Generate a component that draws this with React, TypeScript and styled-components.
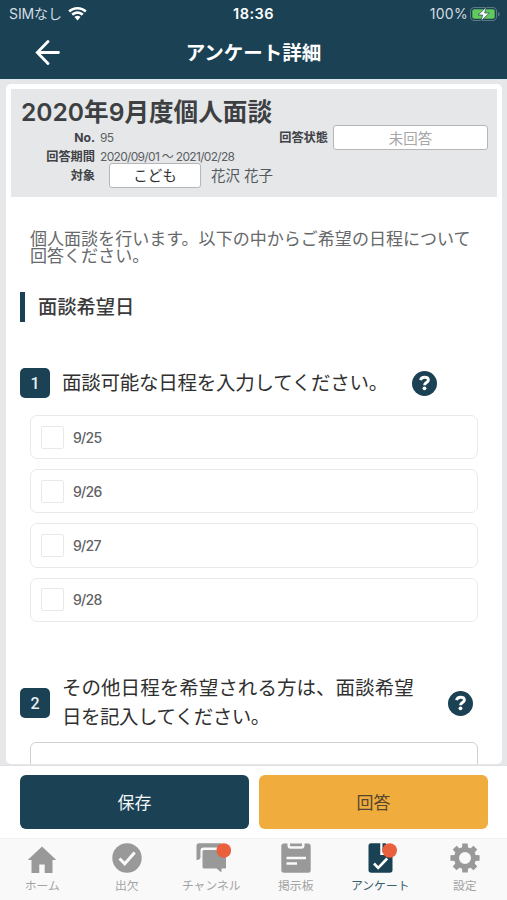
import React from "react";
import styled, { createGlobalStyle } from "styled-components";

const navy = "#1b4154";
const panel = "#e5e7e9";

const GlobalStyle = createGlobalStyle`
  *, *::before, *::after { box-sizing: border-box; }
  body {
    margin: 0;
    background: #fff;
    font-family: Inter, "Noto Sans CJK JP", sans-serif;
    color: #3d3f42;
    overflow: hidden;
  }
`;

const Screen = styled.div`
  display: flex;
  flex-direction: column;
  width: 507px;
  height: 900px;
  overflow: hidden;
`;

const Header = styled.header`
  flex: none;
  height: 79px;
  background: ${navy};
  color: #fff;
`;

const StatusBar = styled.div`
  display: grid;
  grid-template-columns: 1fr auto 1fr;
  align-items: center;
  height: 27px;
  padding: 0 9px;
`;

const Carrier = styled.div`
  display: flex;
  align-items: center;
  gap: 6px;
  font-size: 14px;
  line-height: 20px;
  letter-spacing: -0.1px;
  color: #d3dce1;
`;

const Clock = styled.div`
  font-size: 14.5px;
  font-weight: 600;
  letter-spacing: 0.45px;
`;

const Power = styled(Carrier)`
  justify-content: flex-end;
  gap: 2px;
  margin-right: -3px;
  letter-spacing: 0.3px;
`;

const NavBar = styled.div`
  display: grid;
  grid-template-columns: 60px 1fr 60px;
  align-items: center;
  height: 51px;
`;

const BackButton = styled.button`
  display: flex;
  justify-content: flex-end;
  padding: 0;
  border: 0;
  background: none;
  color: #fff;
`;

const NavTitle = styled.h1`
  margin: 0;
  text-align: center;
  font-size: 19.5px;
  font-weight: 700;
  line-height: 28px;
`;

const Body = styled.main`
  flex: none;
  height: 687px;
  padding: 4px 5px 0 6px;
  background: ${panel};
  border-top: 1px solid #dce8f2;
  border-bottom: 1px solid #dfe1e3;
`;

const Card = styled.section`
  height: 680px;
  padding: 5px 5px 0;
  border-radius: 5px;
  background: #fff;
  overflow: hidden;
`;

const Summary = styled.div`
  height: 108px;
  padding: 9px 10px 0;
  background: ${panel};
`;

const SurveyTitle = styled.h2`
  margin: 0 0 1px;
  font-size: 24.6px;
  font-weight: 600;
  line-height: 28px;
  white-space: nowrap;
`;

const MetaColumns = styled.div`
  display: flex;
  justify-content: space-between;
`;

const MetaList = styled.dl`
  margin: 1px 0 0;
`;

const MetaRow = styled.div<{ $height: number }>`
  display: grid;
  grid-template-columns: 74px auto;
  column-gap: 5px;
  align-items: center;
  align-content: center;
  height: ${(p) => p.$height}px;
  white-space: nowrap;
`;

const MetaLabel = styled.dt`
  text-align: right;
  font-size: 12.2px;
  font-weight: 700;
  line-height: 16px;
  color: #404245;
`;

const MetaValue = styled.dd`
  display: flex;
  align-items: center;
  margin: 0;
  font-size: 12px;
  line-height: 16px;
  letter-spacing: -0.68px;
  color: #5c5f62;
`;

const Pill = styled.span<{ $width: number; $muted?: boolean }>`
  display: flex;
  align-items: center;
  justify-content: center;
  width: ${(p) => p.$width}px;
  height: 25px;
  border: 1px solid #b4b6b8;
  border-radius: 3px;
  background: #fff;
  font-size: 14.5px;
  letter-spacing: 0;
  color: ${(p) => (p.$muted ? "#a7a7a7" : "#303030")};
`;

const TargetPill = styled(Pill)`
  margin: 0 10px 0 9px;
`;

const TargetName = styled.span`
  font-size: 14.5px;
  letter-spacing: 0;
  color: #56595c;
`;

const AnswerState = styled.div`
  display: flex;
  align-items: center;
  gap: 5px;
  height: 25px;
  margin: -2px -1px 0 0;
`;

const Message = styled.p`
  width: 450px;
  margin: 33px 0 0 19px;
  font-size: 17.05px;
  line-height: 17px;
  color: #66686a;
`;

const SectionTitle = styled.h3`
  display: flex;
  align-items: center;
  height: 30px;
  margin: 28px 0 0 9px;
  padding-left: 13px;
  border-left: 5px solid ${navy};
  font-size: 19.3px;
  font-weight: 500;
  line-height: 30px;
  color: #3a3a3a;
`;

const Question = styled.div<{ $top: number; $height: number }>`
  display: flex;
  align-items: center;
  height: ${(p) => p.$height}px;
  margin: ${(p) => p.$top}px 0 0 9px;
`;

const NumberBadge = styled.span`
  display: grid;
  place-items: center;
  flex: none;
  width: 30px;
  height: 30px;
  margin-right: 12px;
  border-radius: 5px;
  background: ${navy};
  color: #e9f0f3;
  font-family: Roboto, sans-serif;
  font-size: 16px;
  font-weight: 500;
`;

const QuestionText = styled.div<{ $width: number }>`
  width: ${(p) => p.$width}px;
  font-size: 19.5px;
  line-height: 29px;
  white-space: nowrap;
  color: #303030;
`;

const QuestionLine = styled.div<{ $spacing: number }>`
  letter-spacing: ${(p) => p.$spacing}px;
`;

const Options = styled.div`
  display: flex;
  flex-direction: column;
  gap: 10px;
  margin: 17px 0 0 19px;
`;

const Option = styled.label`
  display: flex;
  align-items: center;
  gap: 9px;
  width: 448px;
  height: 44.2px;
  padding-left: 10px;
  border: 1.5px solid #e8e9e9;
  border-radius: 7px;
  font-size: 14px;
  letter-spacing: -0.7px;
  font-weight: 500;
  color: #606264;
`;

const CheckBox = styled.input`
  appearance: none;
  width: 23px;
  height: 23px;
  margin: 0;
  border: 1.5px solid #e8e9e9;
  border-radius: 2px;
  background: #fff;
`;

const AnswerBox = styled.textarea`
  display: block;
  width: 448px;
  height: 80px;
  margin: 9px 0 0 19px;
  border: 1px solid #ced1d2;
  border-radius: 6px;
  resize: none;
`;

const Actions = styled.div`
  display: grid;
  flex: none;
  grid-template-columns: 1fr 1fr;
  gap: 10px;
  height: 72px;
  padding: 9px 19px 9px 20px;
  background: #fff;
`;

const ActionButton = styled.button<{ $primary?: boolean }>`
  padding: 0 0 2px;
  border: 0;
  border-radius: 6px;
  background: ${(p) => (p.$primary ? navy : "#f0ad3e")};
  color: ${(p) => (p.$primary ? "#f2f6f8" : "#55462e")};
  font-family: inherit;
  font-size: 17px;
`;

const TabBar = styled.nav`
  display: grid;
  flex: none;
  grid-template-columns: repeat(6, 1fr);
  height: 62px;
  background: #f9f9f9;
  border-top: 1px solid #f0f0f0;
`;

const Tab = styled.a<{ $active?: boolean }>`
  display: flex;
  flex-direction: column;
  align-items: center;
  padding-top: 4px;
  gap: 5px;
  font-size: 11.8px;
  line-height: 16px;
  white-space: nowrap;
  color: ${(p) => (p.$active ? navy : "#999")};
`;

const TabLabel = styled.span<{ $active?: boolean }>`
  color: ${(p) => (p.$active ? "#38606f" : "#a2a2a2")};
`;

const Svg = styled.svg`
  display: block;
  flex: none;
`;

const WifiIcon = () => (
  <Svg width="19" height="14" viewBox="0 0 19 14" fill="#fff">
    <path d="M9.500 0C5.900 0 2.700 1.300.300 3.600l1.800 1.900C4 3.600 6.600 2.600 9.500 2.600s5.500 1 7.400 2.900l1.800-1.900C16.300 1.300 13.100 0 9.500 0z" />
    <path d="M9.500 4.300c-2.400 0-4.500.9-6.100 2.500l1.800 1.900c1.100-1.100 2.600-1.700 4.300-1.700s3.200.6 4.300 1.700l1.800-1.900C14 5.200 11.900 4.300 9.500 4.300z" />
    <path d="M9.500 8.700c-1.200 0-2.200.4-3 1.200l3 3.700 3-3.700c-.8-.8-1.800-1.200-3-1.200z" />
  </Svg>
);

const BatteryIcon = () => (
  <Svg width="31" height="16" viewBox="0 0 31 16">
    <rect x=".5" y="1.500" width="26" height="13" rx="3.500" fill="none" stroke="#5d7985" />
    <rect x="2.300" y="3.300" width="22.400" height="9.400" rx="2" fill="#62ca5a" />
    <path d="M28 6v4.500c1.200-.4 1.700-1.200 1.700-2.200S29.200 6.400 28 6z" fill="#5d7985" />
    <path d="M16.500 1 8 9h4.700l-1.900 6.200L19.300 7h-4.700z" fill="#fff" stroke={navy} strokeWidth=".7" />
  </Svg>
);

const BackIcon = () => (
  <Svg width="25" height="25" viewBox="0 0 25 25" fill="none" stroke="#fff" strokeWidth="2.800" strokeLinecap="round">
    <path d="M23.500 12.500H2.500M13 1.500 2.300 12.500 13 23.500" />
  </Svg>
);

const HelpButton = styled.button<{ $gap: number }>`
  display: grid;
  place-items: center;
  flex: none;
  width: 25px;
  height: 25px;
  margin-left: ${(p) => p.$gap}px;
  padding: 0;
  border: 0;
  border-radius: 50%;
  background: ${navy};
  color: #fff;
`;

const HelpIcon = () => (
  <Svg width="11" height="16" viewBox="0 0 11 16" fill="none" stroke="#fff" strokeWidth="2.900">
    <path d="M1.500 5.200c.5-1.900 2-3 4-3 2.300 0 3.900 1 3.900 2.800 0 2.600-3.800 2.500-3.800 5.200" />
    <circle cx="5.500" cy="13.300" r="1.900" fill="#fff" stroke="none" />
  </Svg>
);

const HomeIcon = () => (
  <Svg width="30" height="30" viewBox="0 0 30 30" fill="currentColor">
    <path d="M15 3.500.700 17h3.800v13.500h7.800v-9h5.400v9h7.800V17h3.800z" />
  </Svg>
);

const CheckCircleIcon = () => (
  <Svg width="30" height="30" viewBox="0 0 30 30">
    <circle cx="15" cy="15" r="14.700" fill="currentColor" />
    <path d="m7.500 15.500 5.200 5.200 10-11.200" fill="none" stroke="#fafafa" strokeWidth="3" />
  </Svg>
);

const ChannelIcon = () => (
  <Svg width="40" height="30" viewBox="-5 0 40 30">
    <path d="M.5 17V3Q.5.300 3.200.300H25v4.200H7.500Q4.500 4.500 4.500 7.500V14q0 3-4 3z" fill="currentColor" />
    <path d="M8 7h21q1 0 1 1v16.500q0 1-1 1h-3.500v4l-5-4H8q-1.500 0-1.500-1.500V8.500Q6.500 7 8 7z" fill="currentColor" />
    <circle cx="27.800" cy="7.500" r="7.300" fill="#ea603d" />
  </Svg>
);

const BoardIcon = () => (
  <Svg width="30" height="30" viewBox="0 0 30 30">
    <path d="M3 .5h3.500v2.200q0 3 3 3h11q3 0 3-3V.500H27q2.700 0 2.700 2.700v24q0 2.500-2.700 2.500H3Q.3 29.700.3 27V3.200Q.3.500 3 .5z" fill="currentColor" />
    <path d="M9 .5h12v1.700q0 1-1 1H10q-1 0-1-1z" fill="currentColor" />
    <path d="M5.500 15h19.500M5.500 20.500h10.500" stroke="#fafafa" strokeWidth="2.400" />
  </Svg>
);

const SurveyIcon = () => (
  <Svg width="34" height="30" viewBox="0 0 34 30">
    <path d="M8 .3h9.500V12H29.500v15q0 2.700-2.700 2.700H8.200Q5.500 29.700 5.500 27V3Q5.500.3 8 .3z" fill="currentColor" />
    <path d="M17.500.3h2V12h-2z" fill="#fff" />
    <path d="M19.500.3H23v9h-3.500z" fill="currentColor" />
    <path d="m11 20.500 4.200 4.300 9-9.300" fill="none" stroke="#fff" strokeWidth="2.600" />
    <circle cx="26.700" cy="7.500" r="7.300" fill="#ea603d" />
  </Svg>
);

const GearIcon = () => (
  <Svg width="30" height="30" viewBox="-15 -15 30 30">
    <circle r="8.500" fill="none" stroke="currentColor" strokeWidth="5" />
    {[0, 45, 90, 135, 180, 225, 270, 315].map((angle) => (
      <path key={angle} d="M-3-9.500-2.700-14.600h5.400L3-9.500z" fill="currentColor" transform={`rotate(${angle})`} />
    ))}
  </Svg>
);

const tabs = [
  { label: "ホーム", Icon: HomeIcon },
  { label: "出欠", Icon: CheckCircleIcon },
  { label: "チャンネル", Icon: ChannelIcon },
  { label: "掲示板", Icon: BoardIcon },
  { label: "アンケート", Icon: SurveyIcon, active: true },
  { label: "設定", Icon: GearIcon },
];

const dates = ["9/25", "9/26", "9/27", "9/28"];

export default function App() {
  return (
    <Screen lang="ja">
      <GlobalStyle />
      <Header>
        <StatusBar>
          <Carrier>
            <span>SIMなし</span>
            <WifiIcon />
          </Carrier>
          <Clock>18:36</Clock>
          <Power>
            <span>100%</span>
            <BatteryIcon />
          </Power>
        </StatusBar>
        <NavBar>
          <BackButton aria-label="戻る">
            <BackIcon />
          </BackButton>
          <NavTitle>アンケート詳細</NavTitle>
        </NavBar>
      </Header>

      <Body>
        <Card>
          <Summary>
            <SurveyTitle>2020年9月度個人面談</SurveyTitle>
            <MetaColumns>
              <MetaList>
                <MetaRow $height={19}>
                  <MetaLabel>No.</MetaLabel>
                  <MetaValue>95</MetaValue>
                </MetaRow>
                <MetaRow $height={20}>
                  <MetaLabel>回答期間</MetaLabel>
                  <MetaValue>2020/09/01 〜 2021/02/28</MetaValue>
                </MetaRow>
                <MetaRow $height={17}>
                  <MetaLabel>対象</MetaLabel>
                  <MetaValue>
                    <TargetPill $width={92}>こども</TargetPill>
                    <TargetName>花沢 花子</TargetName>
                  </MetaValue>
                </MetaRow>
              </MetaList>
              <AnswerState>
                <MetaLabel as="span">回答状態</MetaLabel>
                <Pill $width={155} $muted>
                  未回答
                </Pill>
              </AnswerState>
            </MetaColumns>
          </Summary>

          <Message>個人面談を行います。以下の中からご希望の日程について回答ください。</Message>
          <SectionTitle>面談希望日</SectionTitle>

          <Question $top={46} $height={30}>
            <NumberBadge>1</NumberBadge>
            <QuestionText $width={335}>
              <QuestionLine $spacing={-0.25}>面談可能な日程を入力してください。</QuestionLine>
            </QuestionText>
            <HelpButton $gap={15} aria-label="ヘルプ">
              <HelpIcon />
            </HelpButton>
          </Question>
          <Options>
            {dates.map((date) => (
              <Option key={date}>
                <CheckBox type="checkbox" />
                {date}
              </Option>
            ))}
          </Options>

          <Question $top={52} $height={59}>
            <NumberBadge>2</NumberBadge>
            <QuestionText $width={356}>
              <QuestionLine $spacing={0.04}>その他日程を希望される方は、面談希望</QuestionLine>
              <QuestionLine $spacing={-0.5}>日を記入してください。</QuestionLine>
            </QuestionText>
            <HelpButton $gap={30} aria-label="ヘルプ">
              <HelpIcon />
            </HelpButton>
          </Question>
          <AnswerBox />
        </Card>
      </Body>

      <Actions>
        <ActionButton $primary>保存</ActionButton>
        <ActionButton>回答</ActionButton>
      </Actions>

      <TabBar>
        {tabs.map(({ label, Icon, active }) => (
          <Tab key={label} $active={active}>
            <Icon />
            <TabLabel $active={active}>{label}</TabLabel>
          </Tab>
        ))}
      </TabBar>
    </Screen>
  );
}
